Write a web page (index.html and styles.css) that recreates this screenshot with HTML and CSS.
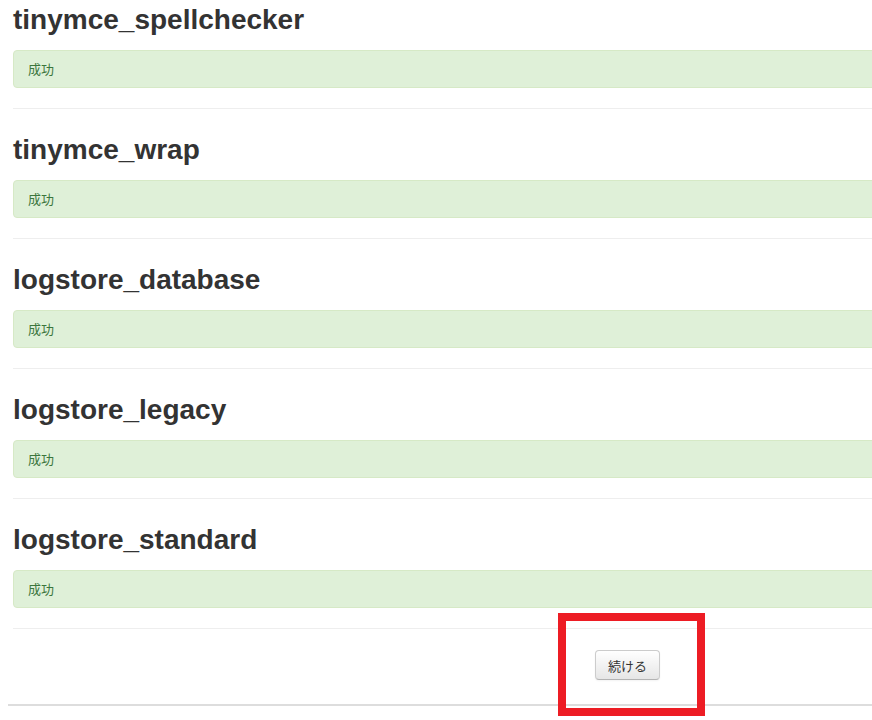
FILE: index.html
```html
<!DOCTYPE html>
<html lang="ja">
  <head>
    <meta charset="UTF-8" />
    <meta name="viewport" content="width=device-width, initial-scale=1.0" />
    <title>プラグインのアップグレード</title>
    <link rel="stylesheet" href="styles.css">
  </head>
  <body>
    <div class="page">
      <div class="plugin">
        <h2>tinymce_spellchecker</h2>
        <div class="alert-success">成功</div>
        <hr />
      </div>
      <div class="plugin">
        <h2>tinymce_wrap</h2>
        <div class="alert-success">成功</div>
        <hr />
      </div>
      <div class="plugin">
        <h2>logstore_database</h2>
        <div class="alert-success">成功</div>
        <hr />
      </div>
      <div class="plugin">
        <h2>logstore_legacy</h2>
        <div class="alert-success">成功</div>
        <hr />
      </div>
      <div class="plugin">
        <h2>logstore_standard</h2>
        <div class="alert-success">成功</div>
        <hr />
      </div>
      <div class="continue">
        <button class="btn">続ける</button>
        <div class="highlight"></div>
      </div>
    </div>
  </body>
</html>
```

FILE: styles.css
```css
body {
  margin: 0 0 0 8px;
  overflow: hidden;
  background: #fff;
  font-family: "Liberation Sans", Arial, "Noto Sans CJK JP", sans-serif;
  color: #333;
}
.page {
  width: 1239px;
  padding-bottom: 14px;
}
.plugin {
  margin-left: 5px;
  padding-top: 25px;
}
.plugin:first-child {
  padding-top: 4px;
}
.plugin h2 {
  margin: 0 0 15px;
  padding-top: 1px;
  font-size: 28px;
  line-height: 30px;
  font-weight: bold;
  color: #333;
}
.alert-success {
  padding: 9px 14px;
  line-height: 18px;
  font-size: 13px;
  font-family: "Noto Sans CJK JP", sans-serif;
  color: #3c763d;
  background-color: #dff0d8;
  border: 1px solid #d6e9c6;
  border-radius: 4px;
  margin-bottom: 20px;
}
.plugin hr {
  margin: 0;
  border: 0;
  border-top: 1px solid #eee;
}
.continue {
  position: relative;
  text-align: center;
  padding: 21px 0 24px;
  border-bottom: 2px solid #ddd;
}
.btn {
  height: 30px;
  padding: 0 12px;
  font-size: 13px;
  font-family: "Noto Sans CJK JP", sans-serif;
  color: #333;
  background: linear-gradient(#fff, #e6e6e6);
  border: 1px solid #ccc;
  border-bottom-color: #b3b3b3;
  border-radius: 4px;
  box-shadow: 0 1px 2px rgba(0, 0, 0, 0.05);
  cursor: pointer;
  vertical-align: top;
}
.highlight {
  position: absolute;
  left: 550px;
  top: -16px;
  width: 147px;
  height: 103px;
  box-sizing: border-box;
  border: 8px solid #ed1c24;
}
```
